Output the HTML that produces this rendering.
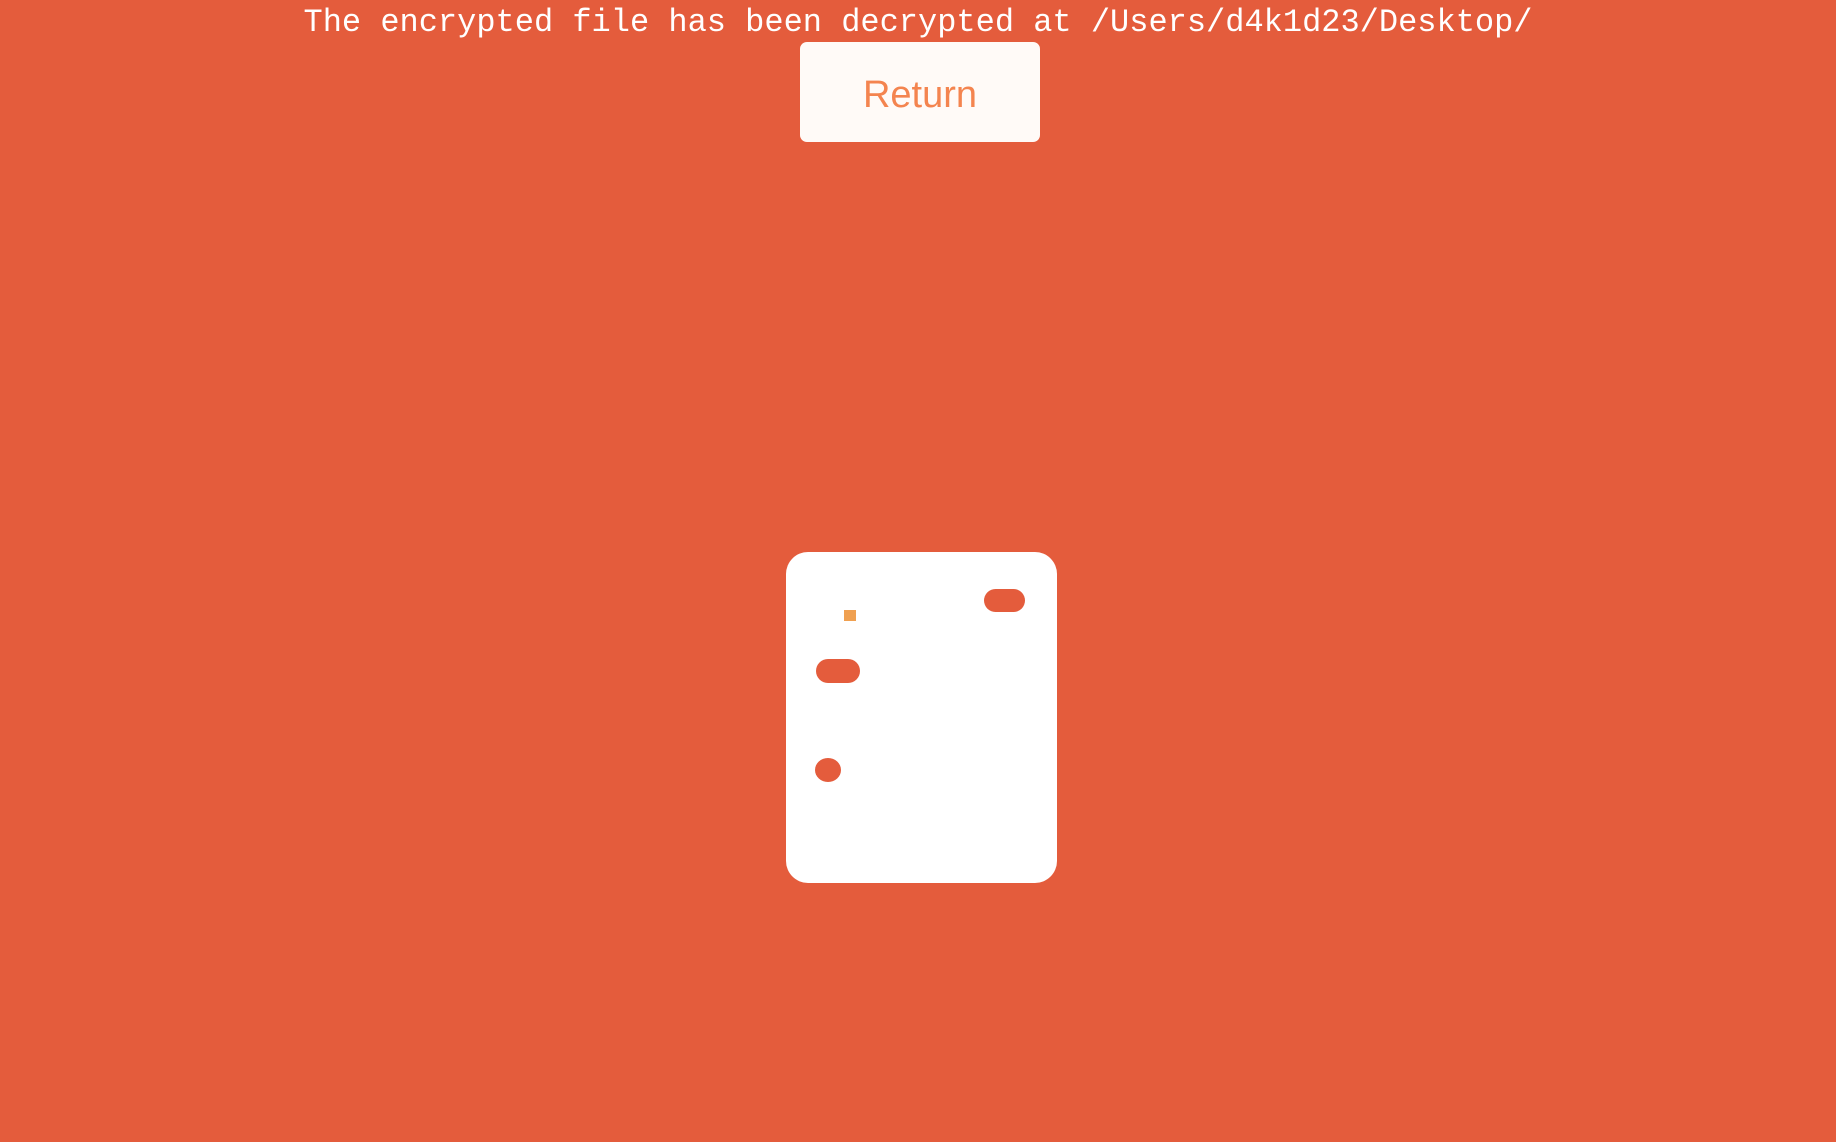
<!DOCTYPE html>
<html><head><meta charset="utf-8"><style>
html,body{margin:0;padding:0;}
body{width:1836px;height:1142px;background:#e45c3c;position:relative;overflow:hidden;}
.msg{position:absolute;left:0;width:1836px;top:5px;text-align:center;color:#fff;font-family:"Liberation Mono",monospace;font-size:32px;line-height:36px;white-space:nowrap;}
.btn{position:absolute;left:800px;top:42px;width:240px;height:100px;background:#fffaf7;border-radius:7px;color:#f4844f;font-family:"Liberation Sans",sans-serif;font-size:38px;line-height:106px;text-align:center;}
.card{position:absolute;left:786px;top:552px;width:271px;height:331px;background:#fff;border-radius:22px;}
.o{position:absolute;background:#e45c3c;border-radius:12px;}
</style></head><body>
<div class="msg">The encrypted file has been decrypted at /Users/d4k1d23/Desktop/</div>
<div class="btn">Return</div>
<div class="card">
<div class="o" style="left:198px;top:37px;width:41px;height:23px;"></div>
<div class="o" style="left:30px;top:107px;width:44px;height:24px;"></div>
<div class="o" style="left:29px;top:206px;width:26px;height:24px;border-radius:50%;"></div>
<div style="position:absolute;left:58px;top:58px;width:12px;height:11px;background:#f0a050;"></div>
</div>
</body></html>
